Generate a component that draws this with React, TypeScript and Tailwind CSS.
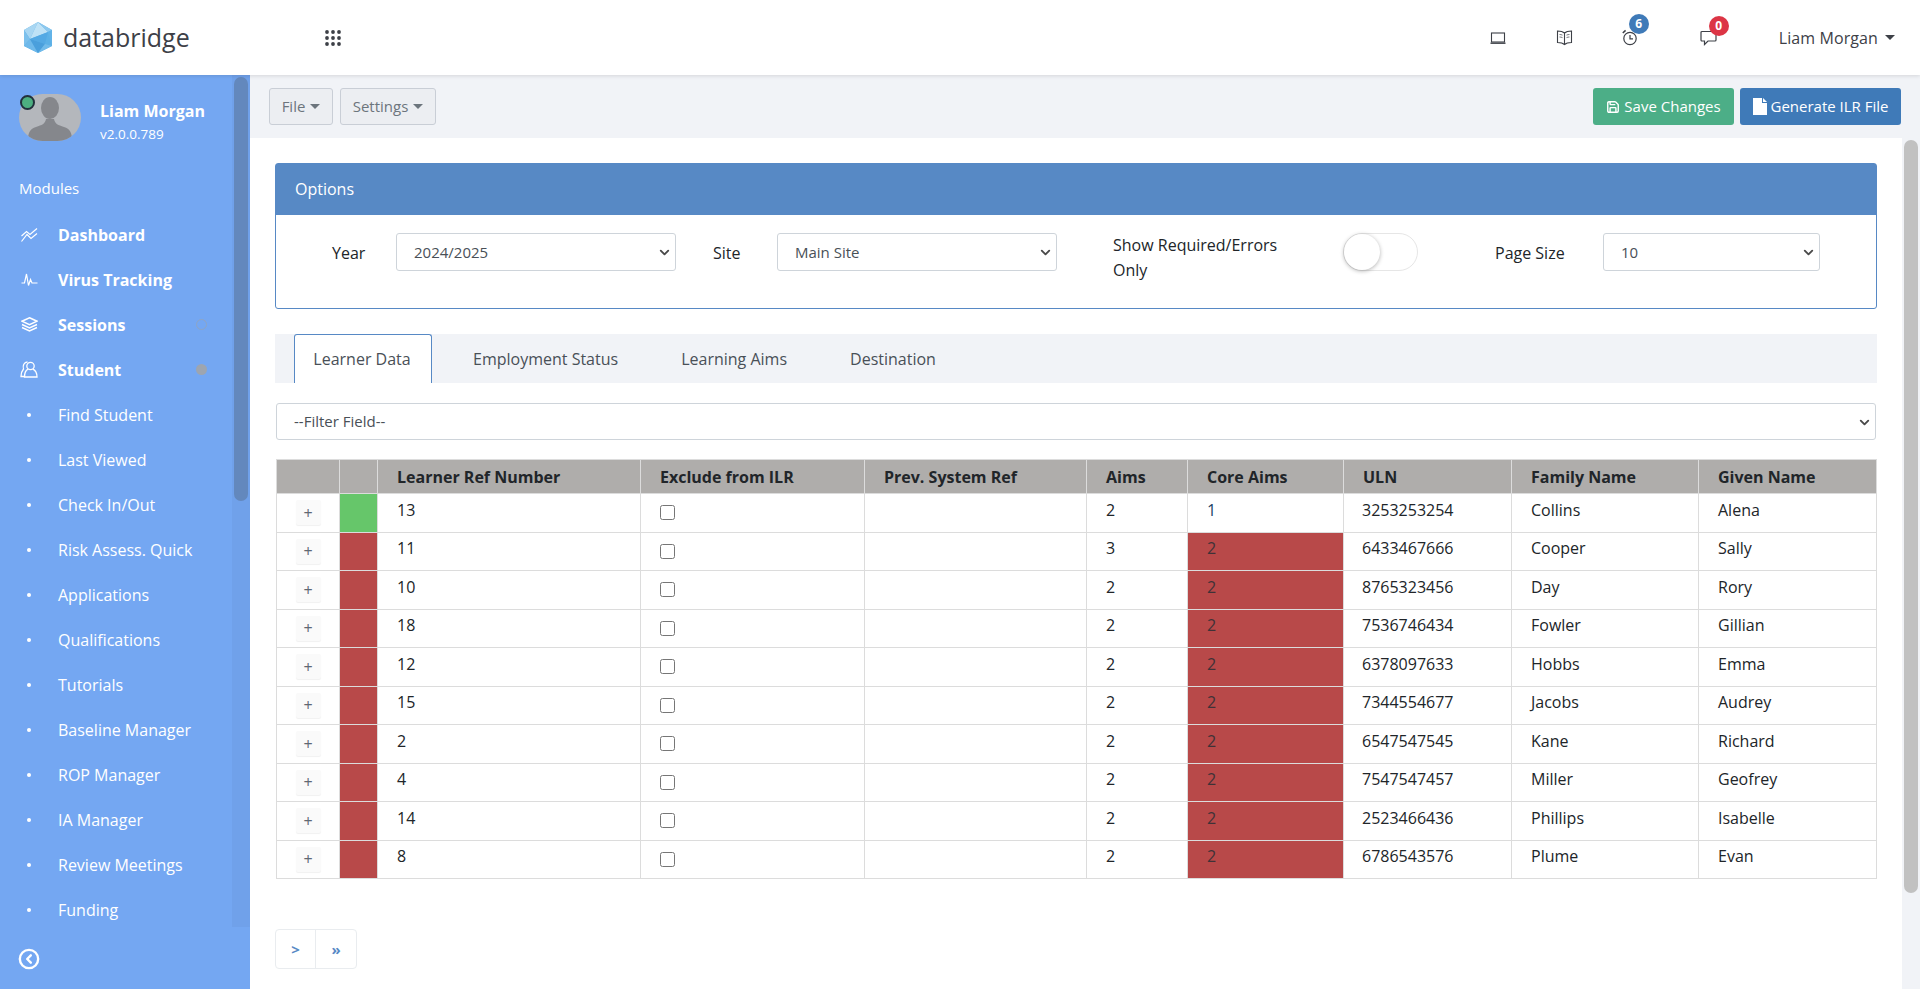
import React from 'react';
import { ChevronDown, Save, CircleChevronLeft } from 'lucide-react';

const Logo = () => (
    <svg width="30" height="32" viewBox="0 0 30 32">
        <polygon points="15,0 29,8 29,24 15,31 1,24 1,8" fill="#5cb0e6" />
        <polygon points="15,0 1,8 7,17" fill="#a8d6f2" />
        <polygon points="15,0 7,17 25,10" fill="#bfe2f6" />
        <polygon points="15,0 29,8 25,10" fill="#8cc8ee" />
        <polygon points="29,8 29,24 25,10" fill="#62b3e8" />
        <polygon points="1,8 7,17 1,24" fill="#7cc0ec" />
        <polygon points="1,24 7,17 15,31" fill="#6fb9ea" />
        <polygon points="7,17 25,10 22,22" fill="#54a9e4" />
        <polygon points="7,17 22,22 15,31" fill="#4a9fdc" />
        <polygon points="22,22 29,24 15,31" fill="#72bbea" />
    </svg>
);

const GridIcon = () => (
    <svg width="16" height="16" viewBox="0 0 16 16" fill="#3d4047">
        {[2, 8, 14].map((y) =>
            [2, 8, 14].map((x) => <circle key={`${x}-${y}`} cx={x} cy={y} r="1.9" />)
        )}
    </svg>
);

const LaptopIcon = () => (
    <svg width="16" height="14" viewBox="0 0 16 14" fill="none" stroke="#3d4047" strokeWidth="1.1">
        <rect x="1.5" y="2" width="13" height="9" />
        <path d="M0.5 12.2h15" strokeWidth="1.4" />
    </svg>
);

const BookIcon = () => (
    <svg width="17" height="17" viewBox="0 0 17 17" fill="none" stroke="#3d4047" strokeWidth="1.1">
        <path d="M8.5 4C7 2.6 4.5 2 1.5 2v11.5c3 0 5.5.6 7 2 1.5-1.4 4-2 7-2V2c-3 0-5.5.6-7 2v11.5" />
        <path d="M3.5 5.5c1 0 2 .2 3 .6M3.5 8c1 0 2 .2 3 .6M10.5 6.1c1-.4 2-.6 3-.6M10.5 8.6c1-.4 2-.6 3-.6" strokeWidth="0.7" />
    </svg>
);

const AlarmIcon = () => (
    <svg width="16" height="17" viewBox="0 0 16 17" fill="none" stroke="#3d4047" strokeWidth="1.2">
        <circle cx="8" cy="9.5" r="6.2" />
        <path d="M8 6v3.8h3" />
        <path d="M0.8 4 3.6 1.3" strokeWidth="1.6" />
    </svg>
);

const ChatIcon = () => (
    <svg width="17" height="16" viewBox="0 0 17 16" fill="none" stroke="#3d4047" strokeWidth="1.2">
        <path d="M2 1.5h13a1 1 0 0 1 1 1v7.5a1 1 0 0 1-1 1H8l-3.5 3.5V11H2a1 1 0 0 1-1-1V2.500a1 1 0 0 1 1-1z" />
    </svg>
);

const DashIcon = () => (
    <svg width="17" height="14" viewBox="0 0 17 14" fill="none" stroke="#fff" strokeWidth="1.2">
        <path d="M0.500 8 5.500 3.500 9 6.500 16 0.500" />
        <path d="M0.500 13.500 6 6.500 10 10.500 16 5.500" />
    </svg>
);

const PulseIcon = () => (
    <svg width="17" height="14" viewBox="0 0 17 14" fill="none" stroke="#fff" strokeWidth="1.2">
        <path d="M0.500 10H3.500L5.500 1 7.500 12.500 9.500 6.500 11 10H16.500" />
    </svg>
);

const LayersIcon = () => (
    <svg width="17" height="15" viewBox="0 0 17 15" fill="none" stroke="#fff" strokeWidth="1.5">
        <path d="M8.500 0.800 16 4.200 8.500 7.600 1 4.200z" />
        <path d="M1 7.500 8.500 10.900 16 7.500" />
        <path d="M1 10.500 8.500 13.900 16 10.500" />
    </svg>
);

const PeopleIcon = () => (
    <svg width="18" height="17" viewBox="0 0 18 17" fill="none" stroke="#fff" strokeWidth="1.3">
        <circle cx="10.500" cy="5" r="3.700" />
        <path d="M8 8.200C5.500 9.500 4.500 12.500 4.500 16H17C17 12.500 15.500 9.500 13 8.200" />
        <path d="M7.500 1C4 1 2.500 4.500 3.500 8 1.800 10 1 12.500 1 15.500H4.500" />
    </svg>
);

const SideItem = ({ label, bold, icon, dot }: { label: string; bold?: boolean; icon?: React.ReactNode; dot?: 'empty' | 'full' }) => (
    <div className="flex h-[45px] shrink-0 items-center text-white">
        <div className="flex w-[58px] justify-center">
            {icon ?? <span className="h-[4px] w-[4px] rounded-full bg-white" />}
        </div>
        <span className={`flex-1 text-[16px] ${bold ? 'font-bold' : ''}`}>{label}</span>
        {dot === 'empty' && <span className="mr-[25px] h-[11px] w-[11px] rounded-full border border-[#8fa5c4]" />}
        {dot === 'full' && <span className="mr-[25px] h-[11px] w-[11px] rounded-full bg-[#9da5b0]" />}
    </div>
);

const Select = ({ value, className }: { value: string; className: string }) => (
    <div className={`relative ${className}`}>
        <select className="h-full w-full appearance-none rounded-[3px] border border-[#ced4da] bg-white pl-[17px] text-[15px] text-[#495057]">
            <option>{value}</option>
        </select>
        <ChevronDown size={15} strokeWidth={3} className="pointer-events-none absolute right-[4px] top-[12px] text-[#4a4a4a]" />
    </div>
);

const rows = [
    ['13', '2', '1', '3253253254', 'Collins', 'Alena'],
    ['11', '3', '2', '6433467666', 'Cooper', 'Sally'],
    ['10', '2', '2', '8765323456', 'Day', 'Rory'],
    ['18', '2', '2', '7536746434', 'Fowler', 'Gillian'],
    ['12', '2', '2', '6378097633', 'Hobbs', 'Emma'],
    ['15', '2', '2', '7344554677', 'Jacobs', 'Audrey'],
    ['2', '2', '2', '6547547545', 'Kane', 'Richard'],
    ['4', '2', '2', '7547547457', 'Miller', 'Geofrey'],
    ['14', '2', '2', '2523466436', 'Phillips', 'Isabelle'],
    ['8', '2', '2', '6786543576', 'Plume', 'Evan'],
];

const heads = ['Learner Ref Number', 'Exclude from ILR', 'Prev. System Ref', 'Aims', 'Core Aims', 'ULN', 'Family Name', 'Given Name'];

const subItems = ['Find Student', 'Last Viewed', 'Check In/Out', 'Risk Assess. Quick', 'Applications', 'Qualifications', 'Tutorials', 'Baseline Manager', 'ROP Manager', 'IA Manager', 'Review Meetings', 'Funding'];

export default function App() {
    return (
        <div className="flex h-[989px] w-[1920px] flex-col overflow-hidden bg-white font-['Open_Sans',sans-serif] text-[16px] text-[#212529]">
            {/* Header */}
            <header className="relative z-10 flex h-[75px] shrink-0 items-center bg-white shadow-[0_1px_4px_rgba(0,0,0,0.12)]">
                <div className="flex w-[325px] items-center pl-[23px]">
                    <Logo />
                    <span className="ml-[10px] text-[25px] leading-none text-[#3d4047]">databridge</span>
                </div>
                <GridIcon />
                <div className="ml-auto flex items-center text-[#3d4047]">
                    <span className="mr-[50px]"><LaptopIcon /></span>
                    <span className="mr-[49px]"><BookIcon /></span>
                    <span className="relative mr-[62px]">
                        <AlarmIcon />
                        <span className="absolute left-[7px] top-[-15px] flex h-[20px] w-[20px] items-center justify-center rounded-full bg-[#3f7ab8] text-[12px] font-bold text-white">6</span>
                    </span>
                    <span className="relative mr-[62px]">
                        <ChatIcon />
                        <span className="absolute left-[9px] top-[-14px] flex h-[20px] w-[20px] items-center justify-center rounded-full bg-[#dc3545] text-[12px] font-bold text-white">0</span>
                    </span>
                    <span className="text-[16px] tracking-[0.1px]">Liam Morgan</span>
                    <span className="ml-[7px] mr-[25px] h-0 w-0 border-x-[5px] border-t-[5px] border-x-transparent border-t-[#3d4047]" />
                </div>
            </header>

            <div className="flex min-h-0 flex-1">
                {/* Sidebar */}
                <aside className="flex w-[250px] shrink-0 flex-col bg-[#74a7f2]">
                    <div className="flex h-[852px] min-h-0">
                        <div className="min-w-0 flex-1 overflow-hidden">
                            <div className="flex h-[103px] pl-[19px] pt-[19px]">
                                <div className="relative h-[47px] w-[62px] rounded-[24px] bg-[#b4b7bc]">
                                    <svg width="62" height="47" viewBox="0 0 62 47" className="overflow-hidden rounded-[24px]">
                                        <ellipse cx="31" cy="14" rx="9" ry="11" fill="#85878c" />
                                        <path d="M9 47c0-9 2-12 8-14 6-2 9-3 10-8h8c1 5 4 6 10 8 6 2 8 5 8 14z" fill="#85878c" />
                                    </svg>
                                    <span className="absolute left-[1px] top-[1px] h-[15px] w-[15px] rounded-full border-2 border-[#22303c] bg-[#4cae80]" />
                                </div>
                                <div className="ml-[19px] text-white">
                                    <div className="pt-[5px] text-[16px] font-bold leading-[24px]">Liam Morgan</div>
                                    <div className="text-[13.5px] leading-[23px]">v2.0.0.789</div>
                                </div>
                            </div>
                            <div className="pl-[19px] text-[15px] leading-[20px] text-white">Modules</div>
                            <div className="mt-[14px] flex flex-col">
                                <SideItem label="Dashboard" bold icon={<DashIcon />} />
                                <SideItem label="Virus Tracking" bold icon={<PulseIcon />} />
                                <SideItem label="Sessions" bold icon={<LayersIcon />} dot="empty" />
                                <SideItem label="Student" bold icon={<PeopleIcon />} dot="full" />
                                {subItems.map((s) => (
                                    <SideItem key={s} label={s} />
                                ))}
                            </div>
                        </div>
                        <div className="w-[18px] shrink-0 bg-[#70a1ea] px-[2px] pt-[2px]">
                            <div className="h-[424px] rounded-full bg-[#6388bd]" />
                        </div>
                    </div>
                    <div className="flex flex-1 items-start pl-[18px] pt-[21px]">
                        <CircleChevronLeft size={22} strokeWidth={2.6} className="text-white" />
                    </div>
                </aside>

                <div className="flex min-w-0 flex-1 flex-col bg-[#f1f3f7]">
                    {/* Toolbar */}
                    <div className="flex h-[63px] shrink-0 items-center pl-[19px] pr-[19px] text-[15px]">
                        <button className="flex h-[37px] w-[64px] items-center justify-center rounded-[3px] border border-[#c9ced6] bg-[#eceef2] text-[#6c757d]">
                            File<span className="ml-[5px] h-0 w-0 border-x-[5px] border-t-[5px] border-x-transparent border-t-[#6c757d]" />
                        </button>
                        <button className="ml-[7px] flex h-[37px] w-[96px] items-center justify-center rounded-[3px] border border-[#c9ced6] bg-[#eceef2] text-[#6c757d]">
                            Settings<span className="ml-[5px] h-0 w-0 border-x-[5px] border-t-[5px] border-x-transparent border-t-[#6c757d]" />
                        </button>
                        <button className="ml-auto flex h-[37px] w-[141px] items-center justify-center rounded-[3px] bg-[#4cae87] text-white">
                            <Save size={14} strokeWidth={2.4} className="mr-[4px]" />Save Changes
                        </button>
                        <button className="ml-[6px] flex h-[37px] w-[161px] items-center justify-center rounded-[3px] bg-[#3f7ab8] text-white">
                            <svg width="14" height="17" viewBox="0 0 14 17" className="mr-[4px]" fill="#fff">
                                <path d="M0 0h9v5h5v12H0z" />
                                <path d="M10 0l4 4h-4z" />
                            </svg>
                            Generate ILR File
                        </button>
                    </div>

                    <div className="flex min-h-0 flex-1">
                        <main className="min-w-0 flex-1 bg-white px-[25px] pt-[25px]">
                            {/* Options card */}
                            <section className="rounded-[3px] border border-[#5789c5]">
                                <div className="flex h-[51px] items-center bg-[#5789c5] pb-[1px] pl-[19px] text-[16px] text-white">Options</div>
                                <div className="flex h-[93px] items-start pt-[18px]">
                                    <label className="ml-[56px] w-[64px] pt-[8px]">Year</label>
                                    <Select value="2024/2025" className="h-[38px] w-[280px]" />
                                    <label className="ml-[37px] w-[64px] pt-[8px]">Site</label>
                                    <Select value="Main Site" className="h-[38px] w-[280px]" />
                                    <label className="ml-[56px] w-[230px] leading-[25px]">Show Required/Errors<br />Only</label>
                                    <div className="h-[38px] w-[75px] rounded-full border border-[#e6e6e6] bg-white">
                                        <div className="h-[36px] w-[36px] rounded-full bg-white shadow-[0_1px_4px_rgba(0,0,0,0.3)]" />
                                    </div>
                                    <label className="ml-[77px] w-[108px] pt-[8px]">Page Size</label>
                                    <Select value="10" className="h-[38px] w-[217px]" />
                                </div>
                            </section>

                            {/* Tabs */}
                            <div className="mt-[25px] flex h-[49px] items-stretch bg-[#f1f3f7] pl-[19px]">
                                <div className="flex w-[138px] items-center justify-center rounded-t-[3px] border border-b-0 border-[#5789c5] bg-white pr-[2px] text-[#495057]">Learner Data</div>
                                <div className="ml-[41px] flex items-center text-[#495057]">Employment Status</div>
                                <div className="ml-[63px] flex items-center text-[#495057]">Learning Aims</div>
                                <div className="ml-[63px] flex items-center text-[#495057]">Destination</div>
                            </div>

                            {/* Filter */}
                            <Select value="--Filter Field--" className="mx-px mt-[20px] h-[37px]" />

                            {/* Table */}
                            <table className="mx-px mt-[19px] w-[1600px] table-fixed border-collapse">
                                <colgroup>
                                    <col className="w-[63px]" />
                                    <col className="w-[38px]" />
                                    <col className="w-[263px]" />
                                    <col className="w-[224px]" />
                                    <col className="w-[222px]" />
                                    <col className="w-[101px]" />
                                    <col className="w-[156px]" />
                                    <col className="w-[168px]" />
                                    <col className="w-[187px]" />
                                    <col className="w-[178px]" />
                                </colgroup>
                                <thead>
                                    <tr className="h-[34px] bg-[#afadab]">
                                        <th className="border border-[#dcdcdc]" />
                                        <th className="border border-[#dcdcdc]" />
                                        {heads.map((h) => (
                                            <th key={h} className="border border-[#dcdcdc] pl-[19px] text-left font-bold text-[#212529]">{h}</th>
                                        ))}
                                    </tr>
                                </thead>
                                <tbody>
                                    {rows.map((r, i) => (
                                        <tr key={r[0]} className="h-[38.5px]">
                                            <td className="border border-[#dcdcdc] text-center">
                                                <span className="mx-auto flex h-[25px] w-[25px] items-center justify-center rounded-[2px] bg-[#fafafa] text-[16px] leading-none text-[#5f6873] shadow-[0_1px_1px_rgba(0,0,0,0.06)]">+</span>
                                            </td>
                                            <td className={`border border-[#dcdcdc] ${i === 0 ? 'bg-[#66c66a]' : 'bg-[#b84949]'}`} />
                                            <td className="border border-[#dcdcdc] pb-[6px] pl-[19px]">{r[0]}</td>
                                            <td className="border border-[#dcdcdc] pl-[19px]">
                                                <input type="checkbox" className="block h-[15px] w-[15px]" />
                                            </td>
                                            <td className="border border-[#dcdcdc]" />
                                            <td className="border border-[#dcdcdc] pb-[6px] pl-[19px]">{r[1]}</td>
                                            <td className={`border border-[#dcdcdc] pb-[6px] pl-[19px] ${i === 0 ? 'text-[#1d3f66]' : 'bg-[#b84949] text-[#3f3237]'}`}>{r[2]}</td>
                                            <td className="border border-[#dcdcdc] pb-[6px] pl-[18px]">{r[3]}</td>
                                            <td className="border border-[#dcdcdc] pb-[6px] pl-[19px]">{r[4]}</td>
                                            <td className="border border-[#dcdcdc] pb-[6px] pl-[19px]">{r[5]}</td>
                                        </tr>
                                    ))}
                                </tbody>
                            </table>

                            {/* Pagination */}
                            <div className="mt-[50px] flex h-[40px] w-[82px] rounded-[4px] border border-[#e9ecef] text-[15px] font-bold text-[#5789c5]">
                                <div className="flex w-[40px] items-center justify-center border-r border-[#e9ecef]">&gt;</div>
                                <div className="flex flex-1 items-center justify-center">»</div>
                            </div>
                        </main>
                        <div className="w-[18px] shrink-0 bg-[#f1f3f7] px-[2px] pt-[2px]">
                            <div className="h-[753px] rounded-full bg-[#c1c1c1]" />
                        </div>
                    </div>
                </div>
            </div>
        </div>
    );
}
